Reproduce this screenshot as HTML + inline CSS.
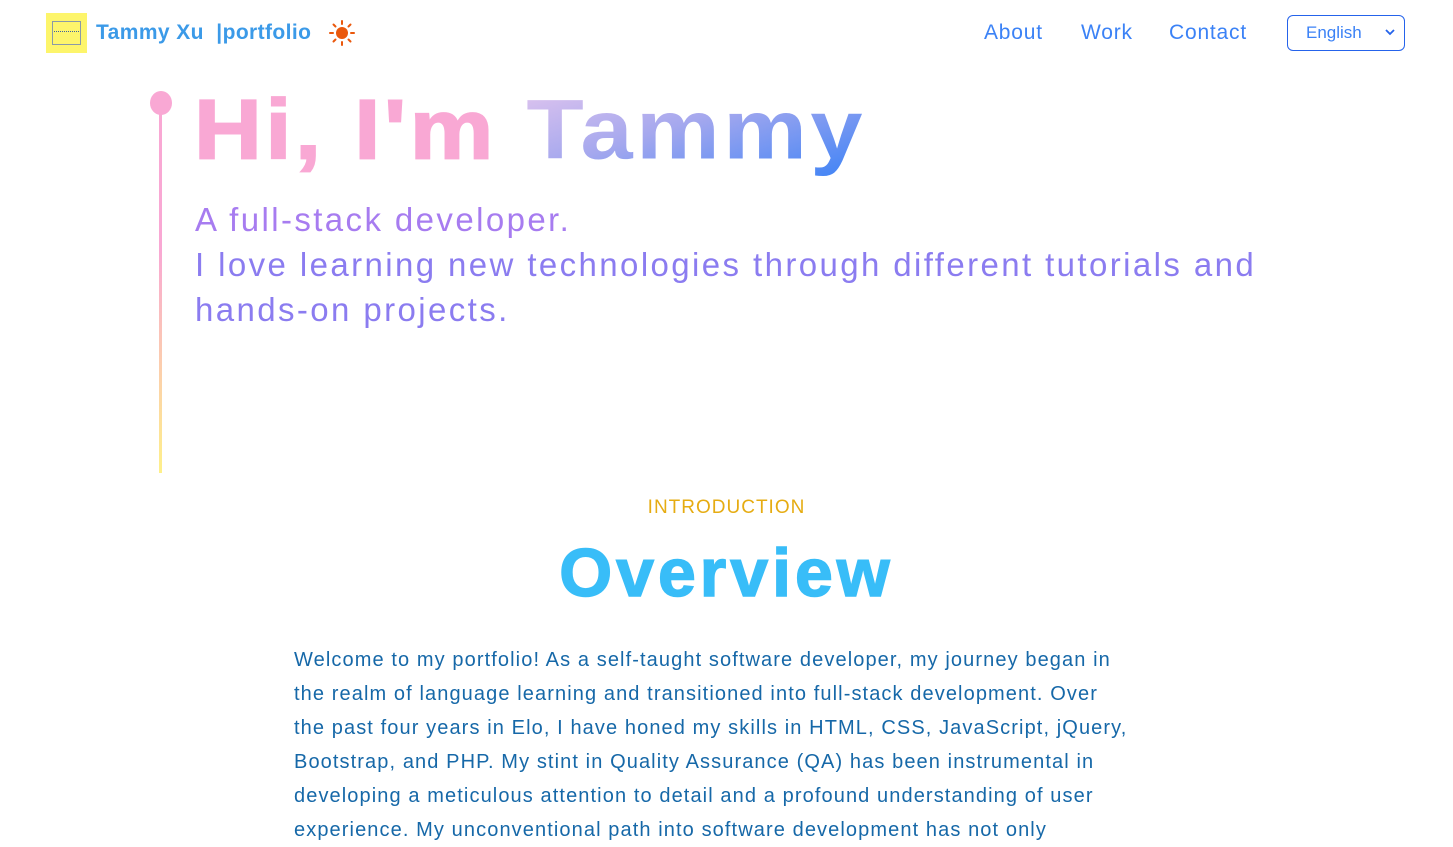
<!DOCTYPE html>
<html><head><meta charset="utf-8"><style>
*{margin:0;padding:0;box-sizing:border-box}
body{width:1453px;height:841px;overflow:hidden;background:#fff;font-family:"Liberation Sans",sans-serif;position:relative}
.logo{position:absolute;left:46px;top:13px;width:41px;height:40px;background:#fdf56b}
.logo i{position:absolute;left:6px;top:8px;width:29px;height:24px;border:1px solid #8a9aa8}
.logo b{position:absolute;left:8px;top:18px;width:25px;height:2px;border-top:1px dotted #4062a0}
.brand{position:absolute;left:96px;top:21px;font-size:21px;font-weight:bold;color:#3b9ae8;letter-spacing:0.4px}
.sun{position:absolute;left:329px;top:20px}
.nav a{position:absolute;top:21px;font-size:21px;color:#3b82f6;text-decoration:none;letter-spacing:0.8px}
.sel{position:absolute;left:1287px;top:15px;width:118px;height:36px;border:1.5px solid #2563eb;border-radius:6px;color:#3b82f6;font-size:17px;padding:7px 0 0 18px}
.sel svg{position:absolute;right:9px;top:13px}
.line{position:absolute;left:159px;top:100px;width:3px;height:373px;background:linear-gradient(#f9a8d4,#f9a8d4 40%,#fef08a)}
.dot{position:absolute;left:150px;top:91px;width:22px;height:24px;border-radius:50%;background:#f9a8d4}
h1{position:absolute;left:194px;top:81px;font-size:94px;font-weight:900;letter-spacing:3.5px;white-space:nowrap;-webkit-text-stroke:2px currentColor;transform:scaleY(0.9);transform-origin:0 0}
h1 .p{color:#f9a8d4}
h1 .g{background:linear-gradient(160deg,#e3c6ee 0%,#a5a8ee 45%,#3b82f6 100%);-webkit-background-clip:text;background-clip:text;color:transparent;-webkit-text-stroke:0}
.sub{position:absolute;left:195px;top:197px;font-size:33px;line-height:45px;color:#8b7cf0;white-space:nowrap;letter-spacing:2.4px}
.sub .a{color:#a77cf0}
.intro{position:absolute;top:497px;left:0;width:1453px;text-align:center;font-size:19px;letter-spacing:1px;color:#e6ac12}
.ov{position:absolute;top:534px;left:0;width:1453px;text-align:center;font-size:68px;font-weight:900;color:#38bdf8;letter-spacing:4px;-webkit-text-stroke:1.5px #38bdf8}
.para{position:absolute;left:294px;top:643px;font-size:20px;line-height:34px;color:#1668a8;white-space:nowrap;letter-spacing:1.1px}
</style></head><body>
<div class="logo"><i></i><b></b></div>
<div class="brand">Tammy Xu &nbsp;|portfolio</div>
<svg class="sun" width="26" height="26" viewBox="0 0 26 26"><circle cx="13" cy="13" r="6" fill="#ea580c"/><g stroke="#ea580c" stroke-width="2" stroke-linecap="round"><path d="M13 1v3M13 22v3M1 13h3M22 13h3M4.5 4.5l2 2M19.5 19.5l2 2M4.5 21.5l2-2M19.5 6.5l2-2"/></g></svg>
<div class="nav"><a style="left:984px">About</a><a style="left:1081px">Work</a><a style="left:1169px">Contact</a></div>
<div class="sel">English<svg width="10" height="7" viewBox="0 0 10 7"><path d="M1 1l4 4 4-4" stroke="#2563eb" stroke-width="1.8" fill="none"/></svg></div>
<div class="line"></div><div class="dot"></div>
<h1><span class="p">Hi, I'm </span><span class="g">Tammy</span></h1>
<div class="sub"><span class="a">A full-stack developer.</span><br>I love learning new technologies through different tutorials and<br>hands-on projects.</div>
<div class="intro">INTRODUCTION</div>
<div class="ov">Overview</div>
<div class="para">Welcome to my portfolio! As a self-taught software developer, my journey began in<br>the realm of language learning and transitioned into full-stack development. Over<br>the past four years in Elo, I have honed my skills in HTML, CSS, JavaScript, jQuery,<br>Bootstrap, and PHP. My stint in Quality Assurance (QA) has been instrumental in<br>developing a meticulous attention to detail and a profound understanding of user<br>experience. My unconventional path into software development has not only</div>
</body></html>
